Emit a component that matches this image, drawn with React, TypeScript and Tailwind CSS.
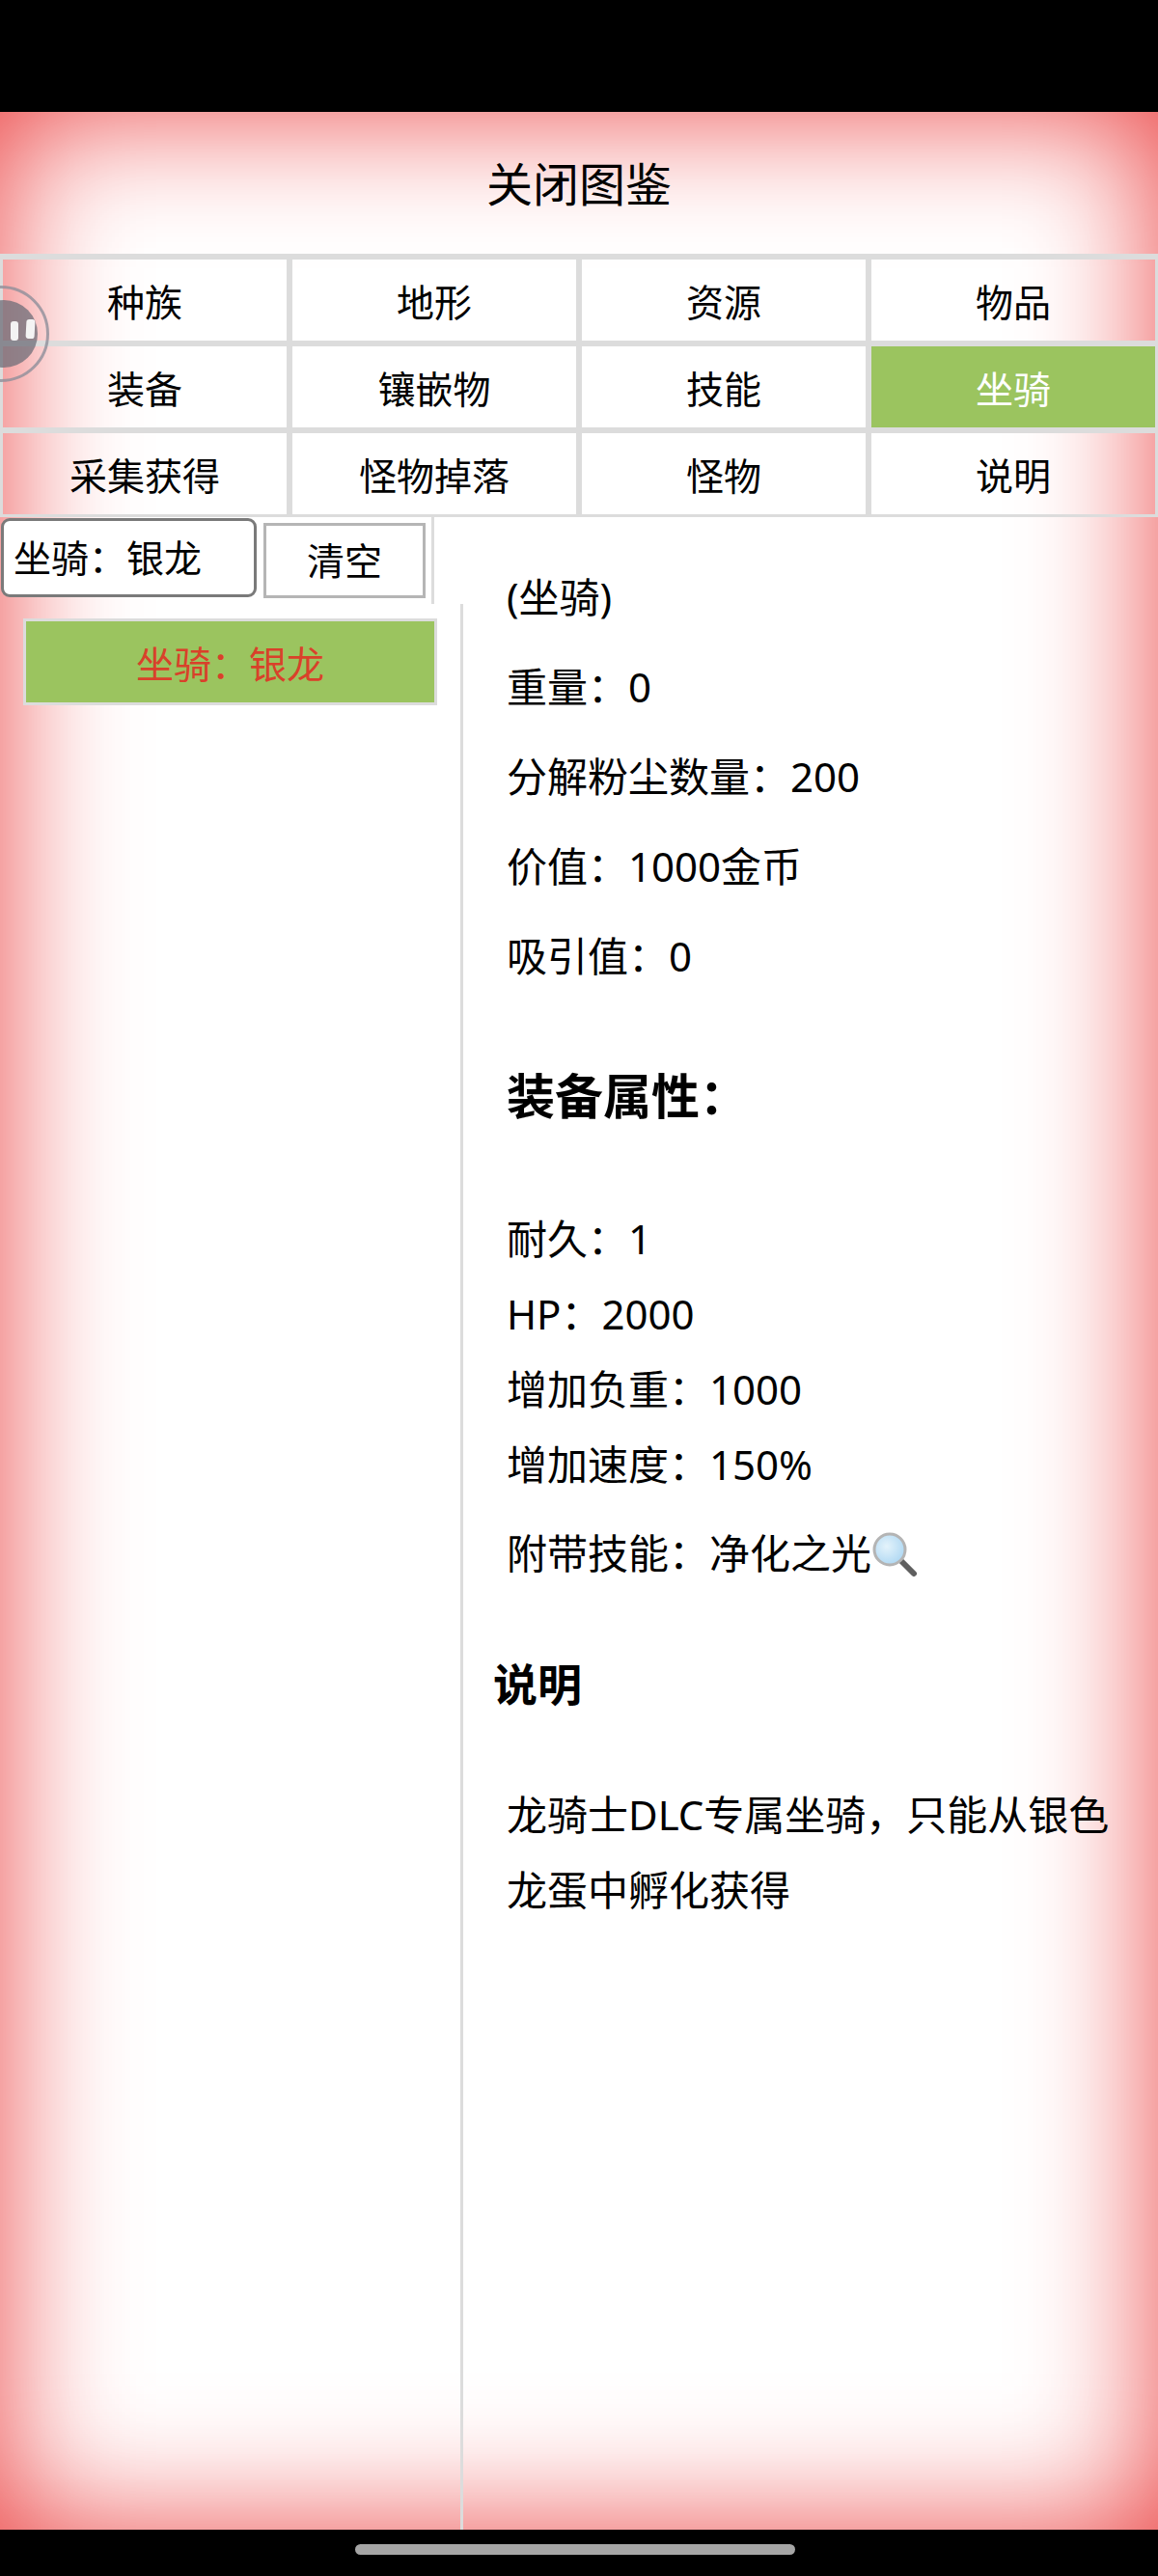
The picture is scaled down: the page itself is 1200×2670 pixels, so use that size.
const tabs = ["种族", "地形", "资源", "物品", "装备", "镶嵌物", "技能", "坐骑", "采集获得", "怪物掉落", "怪物", "说明"];

function FloatBall() {
  return (
    <div className="absolute left-[-49px] top-[296px] w-[100px] h-[100px] rounded-full border-[3px] border-[#8f8f9a]/80">
      <div className="relative ml-[15px] mt-[12px] w-[70px] h-[70px] rounded-full bg-[#6e6e78]/75">
        <span className="absolute left-[42px] top-[22px] w-[8px] h-[20px] rounded-[3px] bg-white/90" />
        <span className="absolute left-[58px] top-[20px] w-[9px] h-[20px] rounded-[3px] bg-white/90 rotate-3" />
      </div>
    </div>
  );
}

function Magnifier() {
  return (
    <svg width="48" height="48" viewBox="0 0 48 48" className="inline-block align-[-9px]">
      <defs>
        <radialGradient id="lens" cx="0.4" cy="0.4" r="0.7">
          <stop offset="0" stopColor="#e4f3fb" />
          <stop offset="1" stopColor="#a9d5f2" />
        </radialGradient>
      </defs>
      <path d="M29 29 L44 44" stroke="#5f5f5f" strokeWidth="6" strokeLinecap="round" />
      <circle cx="19" cy="19" r="16" fill="url(#lens)" stroke="#b4b4b4" strokeWidth="3" />
    </svg>
  );
}

export default function App() {
  return (
    <div className="relative h-[2670px] w-[1200px] overflow-hidden bg-black text-black font-['Noto_Sans','Noto_Sans_CJK_SC',sans-serif] text-[39px]">
      <div className="h-[116px]" />
      <main className="h-[2506px] bg-white shadow-[inset_0_0_135px_#eb4141] flex flex-col">
        <header className="h-[147px] pt-[2px] flex items-center justify-center text-[48px]">关闭图鉴</header>
        <nav className="grid grid-cols-4 border-t-[3px] border-[#dcdcdc]">
          {tabs.map((t) => (
            <div
              key={t}
              className={`h-[90px] pt-[5px] border-[3px] border-[#dcdcdc] flex items-center justify-center ${t === "坐骑" ? "bg-[#9bc45f] text-white" : ""}`}
            >
              {t}
            </div>
          ))}
        </nav>
        <div className="flex flex-1 min-h-0">
          <div className="w-[480px] flex flex-col">
            <div className="w-[450px] h-[90px] shrink-0 border-r-[3px] border-[#dcdcdc] pl-px pt-px flex items-start gap-[7px]">
              <input
                readOnly
                value={"坐骑\uFF1A银龙"}
                className="w-[265px] h-[82px] border-[3px] border-[#7a7a7a] rounded-[9px] bg-white pl-[10px] pb-[4px] outline-none"
              />
              <button className="mt-[5px] w-[168px] h-[78px] border-[3px] border-[#b5b5b5] bg-white">清空</button>
            </div>
            <div className="flex-1 border-r-[3px] border-[#dcdcdc] pl-[24px] pt-[15px]">
              <div className="w-[429px] h-[90px] pt-[4px] border-[3px] border-[#dcdcdc] bg-[#9bc45f] text-[#d9412a] flex items-center justify-center">
                坐骑&#xFF1A;银龙
              </div>
            </div>
          </div>
          <section className="flex-1 pl-[45px] pt-[44px] text-[42px] leading-[78px]">
            <p>(坐骑)</p>
            <p className="mt-[15px]">重量&#xFF1A;0</p>
            <p className="mt-[15px]">分解粉尘数量&#xFF1A;200</p>
            <p className="mt-[15px]">价值&#xFF1A;1000金币</p>
            <p className="mt-[15px]">吸引值&#xFF1A;0</p>
            <h2 className="mt-[67px] text-[50px] font-bold leading-[78px]">装备属性&#xFF1A;</h2>
            <p className="mt-[70px]">耐久&#xFF1A;1</p>
            <p>HP&#xFF1A;2000</p>
            <p>增加负重&#xFF1A;1000</p>
            <p>增加速度&#xFF1A;150%</p>
            <p className="mt-[14px]">附带技能&#xFF1A;净化之光<Magnifier /></p>
            <h3 className="mt-[57px] -ml-[14px] text-[46px] font-bold leading-[78px]">说明</h3>
            <p className="mt-[58px] w-[640px]">龙骑士DLC专属坐骑&#xFF0C;只能从银色龙蛋中孵化获得</p>
          </section>
        </div>
      </main>
      <div className="h-[48px] pl-[368px] pt-[15px]">
        <div className="w-[456px] h-[11px] rounded-full bg-[#a5a5a5]" />
      </div>
      <FloatBall />
    </div>
  );
}
